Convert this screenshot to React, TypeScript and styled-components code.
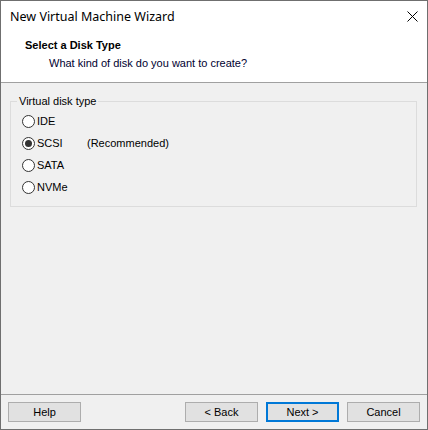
import React, { useState } from "react";
import styled, { createGlobalStyle } from "styled-components";

const Global = createGlobalStyle`
  html, body { margin: 0; padding: 0; background: #f0f0f0; }
  * { box-sizing: border-box; }
`;

const Window = styled.div`
  width: 428px;
  height: 430px;
  border: 1px solid #6f6f6f;
  background: #f0f0f0;
  display: flex;
  flex-direction: column;
  font-family: "Liberation Sans", Arial, sans-serif;
  font-size: 11px;
  color: #000;
`;

const TitleBar = styled.div`
  height: 31px;
  background: #fff;
  display: flex;
  align-items: center;
  justify-content: space-between;
  padding: 0 0 0 9px;
  font-family: "Noto Sans", "Open Sans", sans-serif;
  font-size: 12.5px;
  color: #000;
`;

const CloseButton = styled.div`
  width: 30px;
  height: 31px;
  display: flex;
  align-items: center;
  justify-content: center;
`;

const Header = styled.div`
  height: 51px;
  background: #fff;
  border-bottom: 1px solid #a0a0a0;
  padding: 5px 0 0 24px;
  display: flex;
  flex-direction: column;
`;

const HeaderTitle = styled.div`
  font-weight: bold;
  font-size: 11px;
  line-height: 16px;
  height: 18px;
`;

const HeaderSub = styled.div`
  font-size: 11px;
  line-height: 16px;
  padding-left: 24px;
  color: #000030;
`;

const Body = styled.div`
  flex: 1;
  padding: 11px 10px 0 9px;
`;

const GroupBox = styled.fieldset`
  margin: 0;
  border: 1px solid #dcdcdc;
  padding: 2px 0 8px 0;
  display: flex;
  flex-direction: column;
`;

const Legend = styled.legend`
  padding: 0 2px;
  margin-left: 6px;
  font-size: 11px;
  line-height: 14px;
  height: 14px;
`;

const RadioRow = styled.label`
  display: flex;
  align-items: center;
  flex-shrink: 0;
  height: 22px;
  margin-left: 11px;
  font-size: 11px;
`;

const RadioCircle = styled.span<{ $checked: boolean }>`
  width: 13px;
  height: 13px;
  border-radius: 50%;
  border: 1px solid #333;
  background: #fff;
  display: flex;
  align-items: center;
  justify-content: center;
  margin-right: 2px;
  &::after {
    content: "";
    width: 7px;
    height: 7px;
    border-radius: 50%;
    background: ${(p) => (p.$checked ? "#333" : "transparent")};
  }
`;

const RadioLabel = styled.span`
  width: 50px;
`;

const Note = styled.span``;

const Footer = styled.div`
  height: 35px;
  border-top: 1px solid #a0a0a0;
  display: flex;
  align-items: flex-start;
  padding: 7px 7px 0 7px;
`;

const Spacer = styled.div`
  flex: 1;
`;

const Button = styled.button<{ $primary?: boolean }>`
  width: 73px;
  height: 20px;
  background: #e1e1e1;
  border: ${(p) => (p.$primary ? "2px solid #0078d7" : "1px solid #adadad")};
  font-family: "Liberation Sans", Arial, sans-serif;
  font-size: 11px;
  color: #000;
  padding: 0;
  display: flex;
  align-items: center;
  justify-content: center;
  line-height: 1;
  & + & { margin-left: 8px; }
`;

const options = [
  { id: "IDE", note: "" },
  { id: "SCSI", note: "(Recommended)" },
  { id: "SATA", note: "" },
  { id: "NVMe", note: "" },
];

export default function App() {
  const [sel, setSel] = useState("SCSI");
  return (
    <>
      <Global />
      <Window>
        <TitleBar>
          <span>New Virtual Machine Wizard</span>
          <CloseButton>
            <svg width="11" height="11" viewBox="0 0 11 11">
              <path d="M0.5 0.5 L10.5 10.5 M10.5 0.5 L0.5 10.5" stroke="#000" strokeWidth="1" />
            </svg>
          </CloseButton>
        </TitleBar>
        <Header>
          <HeaderTitle>Select a Disk Type</HeaderTitle>
          <HeaderSub>What kind of disk do you want to create?</HeaderSub>
        </Header>
        <Body>
          <GroupBox>
            <Legend>Virtual disk type</Legend>
            {options.map((o) => (
              <RadioRow key={o.id} onClick={() => setSel(o.id)}>
                <RadioCircle $checked={sel === o.id} />
                <RadioLabel>{o.id}</RadioLabel>
                {o.note && <Note>{o.note}</Note>}
              </RadioRow>
            ))}
          </GroupBox>
        </Body>
        <Footer>
          <Button>Help</Button>
          <Spacer />
          <Button>&lt; Back</Button>
          <Button $primary>Next &gt;</Button>
          <Button>Cancel</Button>
        </Footer>
      </Window>
    </>
  );
}
